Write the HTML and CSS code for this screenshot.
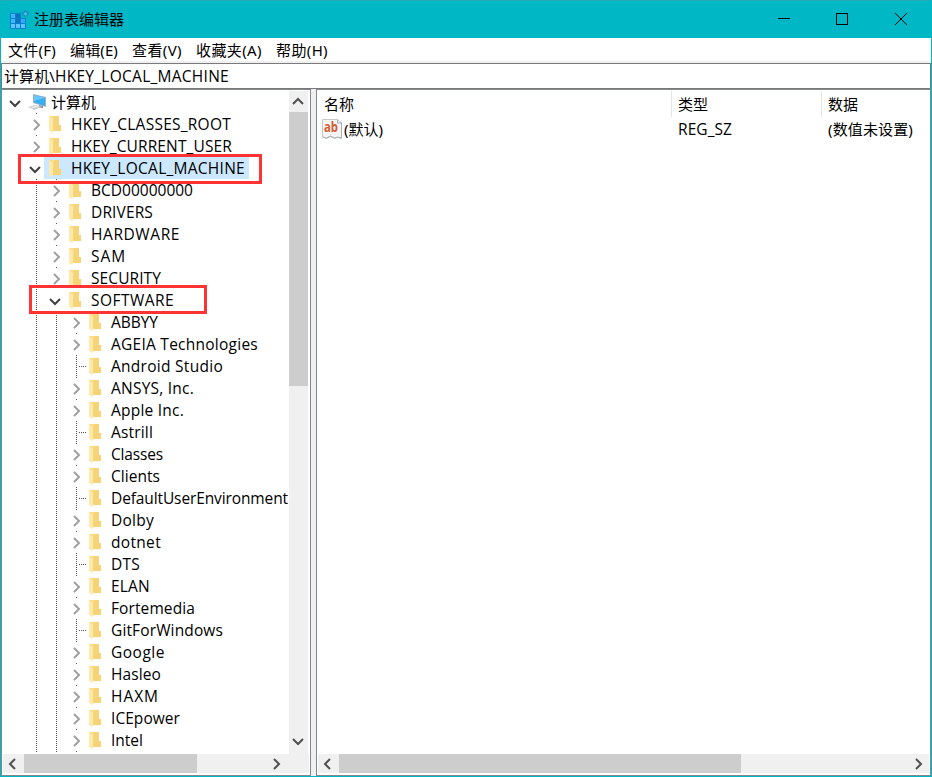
FILE: index.html
```html
<!DOCTYPE html>
<html lang="zh-CN">
<head>
<meta charset="utf-8">
<title>注册表编辑器</title>
<link rel="stylesheet" href="styles.css">
</head>
<body>
<svg class="defs" width="0" height="0" aria-hidden="true">
  <symbol id="folder" viewBox="0 0 13 18"><path d="M0 1h10v9h2v6H3z" fill="#f9dc85"/><path d="M5 1h5v9h2v6H4z" fill="#f5d376"/><path d="M0 1l4 3v13l-1 1-3-2z" fill="#ffe9a9"/></symbol>
  <symbol id="right" viewBox="0 0 8 12"><path d="M1 1l5 5-5 5" fill="none" stroke="currentColor" stroke-width="2"/></symbol>
  <symbol id="down" viewBox="0 0 12 8"><path d="M1 1l5 5 5-5" fill="none" stroke="currentColor" stroke-width="2"/></symbol>
  <symbol id="up" viewBox="0 0 12 8"><path d="M1 7l5-5 5 5" fill="none" stroke="currentColor" stroke-width="2"/></symbol>
  <symbol id="left" viewBox="0 0 8 12"><path d="M7 1L2 6l5 5" fill="none" stroke="currentColor" stroke-width="2"/></symbol>
</svg>
<div class="window">
  <header class="titlebar">
    <svg class="app-icon" width="21" height="20" viewBox="0 0 21 20"><path d="M1 3h16v16H1z" fill="#0a80d0"/><path d="M2 4h4v4H2zM2 9h4v4H2z" fill="#42b4fa"/><path d="M2 14h4v4H2zM7 14h4v4H7zM12 14h4v4h-4z" fill="#5cc5ff"/><path d="M12 9h4v4h-4z" fill="#36a9f3"/><path d="M7 4h4v4H7zM7 9h4v4H7z" fill="#0b72bd"/><path d="M12 0h9v8h-9z" fill="#00b7c5"/><path d="M16.500 0l4 3.500-4 4-4-4z" fill="#168fc0"/><path d="M16.500 2l2 1.700-2 2-2-2z" fill="#48bfdf"/></svg>
    <span class="title" data-w="90">注册表编辑器</span>
    <svg class="controls" width="132" height="14" viewBox="0 0 132 14" fill="none" stroke="#000"><path d="M1 5.500h12M59.500 .5h11v11h-11z" shape-rendering="crispEdges"/><path d="M118 0l12 12M130 0l-12 12"/></svg>
  </header>
  <nav class="menu"><span data-w="48">文件(F)</span><span data-w="48">编辑(E)</span><span data-w="50">查看(V)</span><span data-w="66">收藏夹(A)</span><span data-w="52">帮助(H)</span></nav>
  <div class="address"><span data-w="51">计算机\</span><span class="latin" data-w="174">HKEY_LOCAL_MACHINE</span></div>
  <main class="panes">
    <section class="pane tree-pane">
      <div class="upper">
        <div class="tree" id="tree"></div>
        <div class="vscroll"><svg class="arrow-up" width="12" height="8"><use href="#up"/></svg><div class="vthumb"></div><svg class="arrow-down" width="12" height="8"><use href="#down"/></svg></div>
      </div>
      <div class="hscroll"><svg class="arrow-left" width="8" height="12"><use href="#left"/></svg><div class="hthumb"></div><svg class="arrow-right" width="8" height="12"><use href="#right"/></svg><i class="corner"></i></div>
      <div class="mark mark-machine"></div>
      <div class="mark mark-software"></div>
    </section>
    <section class="pane list-pane">
      <div class="list">
        <div class="columns"><span class="col"><b data-w="30">名称</b></span><span class="col"><b data-w="30">类型</b></span><span class="col"><b data-w="30">数据</b></span></div>
        <div class="columns value"><span class="col"><svg class="ab" width="20" height="20" viewBox="0 0 20 20"><path d="M.5.500h15l4 3v16l-4-1-3 1-4-2-4 2-4-2z" fill="#f5f5f5" stroke="#c3c8cb"/><path d="M15.500 1v3h4v15l-4-1-3 1-4-2-4 2-4-1" fill="none" stroke="#a7adb1"/><text x="2" y="13" textLength="14" lengthAdjust="spacingAndGlyphs">ab</text></svg><b data-w="39">(默认)</b></span><span class="col"><b class="latin" data-w="54">REG_SZ</b></span><span class="col"><b data-w="85">(数值未设置)</b></span></div>
      </div>
      <div class="hscroll"><svg class="arrow-left" width="8" height="12"><use href="#left"/></svg><div class="hthumb wide"></div><svg class="arrow-right" width="8" height="12"><use href="#right"/></svg></div>
    </section>
  </main>
</div>
<script src="script.js"></script>
</body>
</html>
```
FILE: styles.css
```css
* { box-sizing: border-box; }
body { margin: 0; overflow: hidden; font: 15px/22px "Noto Sans", "Noto Sans CJK SC", sans-serif; color: #000; }
.defs { position: absolute; }
svg { display: block; flex: none; }
b { font-weight: 400; }
span, b { white-space: nowrap; }
.latin { font-family: "Open Sans", "Noto Sans", sans-serif; font-size: 15.5px; }
.window { width: 932px; height: 777px; border: solid #00b7c3; border-width: 0 1px 1px; background: #f0f0f0; display: flex; flex-direction: column; }
.titlebar { height: 38px; flex: none; background: #00b7c5; border-top: 1px solid #24abb5; display: flex; align-items: center; padding: 0 22px 0 8px; }
.title { margin: 0 0 2px 4px; }
.controls { margin-left: auto; }
.menu { height: 23px; flex: none; background: #fff; display: flex; gap: 14px; padding: 1px 0 0 7px; }
.address { height: 26px; flex: none; margin-top: 2px; background: #fff; border: 1px solid #7a7a7a; padding: 1px 3px 1px 2px; display: flex; align-items: baseline; }
.panes { flex: 1; display: flex; gap: 5px; min-height: 0; }
.pane { border: 1px solid #828790; background: #fff; padding: 1px; display: flex; flex-direction: column; position: relative; }
.tree-pane { width: 310px; }
.list-pane { flex: 1; }
.upper { height: 663px; display: flex; }
.tree { width: 286px; overflow: hidden; }
.row { height: 22px; display: flex; align-items: center; }
.row.tail { height: 1px; overflow: hidden; align-items: flex-start; }
.guide { width: 20px; height: 22px; flex: none; display: flex; position: relative; color: #a0a0a0; }
.guide.line::before { content: ""; width: 1px; height: 22px; flex: none; margin-left: 13px; background: repeating-linear-gradient(#555 0 1px, transparent 1px 2px); }
.guide.branch::after { content: ""; width: 8px; height: 1px; flex: none; margin-left: 1px; align-self: center; background: repeating-linear-gradient(90deg, transparent 0 1px, #555 1px 2px); }
.guide.closed::before { background: linear-gradient(#555 0 1px, transparent 1px); }
.guide.root::before, .guide.open::before { display: none; }
.chevron { position: absolute; left: 10px; top: 6px; }
.open .chevron { left: 6px; top: 9px; color: #404040; }
.item { display: flex; align-items: center; height: 22px; padding: 0 4px 0 5px; margin-left: 1px; }
.item .name { margin: 0 0 1px 9px; }
.folder { margin: 0 0 1px; }
.item.computer { padding-left: 4px; }
.item.computer .name { margin: 0 0 0 3px; }
.item.selected { background: #cce8ff; }
.vscroll { width: 19px; background: #f0f0f0; display: flex; flex-direction: column; align-items: center; color: #505050; }
.arrow-up { margin: 6px 1px 7px 0; }
.vthumb { width: 19px; height: 274px; background: #cdcdcd; }
.arrow-down { margin: auto 1px 8px 0; }
.hscroll { height: 19px; flex: none; background: #f0f0f0; display: flex; align-items: center; color: #505050; }
.arrow-left { margin: 0 8px 0 5px; }
.hthumb { width: 173px; height: 19px; background: #cdcdcd; }
.hthumb.wide { width: 402px; }
.arrow-right { margin-left: auto; margin-right: 6px; }
.corner { width: 22px; }
.mark { position: absolute; border: 3px solid #ff3333; }
.mark-machine { left: 16px; top: 64px; width: 244px; height: 30px; }
.mark-software { left: 27px; top: 195px; width: 178px; height: 29px; }
.list { height: 663px; }
.columns { display: grid; grid-template-columns: 354px 150px 1fr; height: 26px; }
.columns.value { height: 24px; }
.col { display: flex; align-items: center; padding-left: 6px; border-right: 1px solid #e5e5e5; }
.col:last-child { border: 0; }
.value .col { border-color: transparent; }
.value .col:first-child { padding-left: 4px; gap: 2px; }
.ab text { font: bold 14px "Open Sans", sans-serif; fill: #d45b32; }
```
FILE: script.js
```js
const rows = [
  [0, "计算机", "open", 45], [1, "HKEY_CLASSES_ROOT", "closed", 160],
  [1, "HKEY_CURRENT_USER", "closed", 161], [1, "HKEY_LOCAL_MACHINE", "open", 174],
  [2, "BCD00000000", "closed", 102], [2, "DRIVERS", "closed", 62],
  [2, "HARDWARE", "closed", 89], [2, "SAM", "closed", 35],
  [2, "SECURITY", "closed", 70], [2, "SOFTWARE", "open", 83],
  [3, "ABBYY", "closed", 47], [3, "AGEIA Technologies", "closed", 147],
  [3, "Android Studio", "branch", 112], [3, "ANSYS, Inc.", "closed", 83],
  [3, "Apple Inc.", "closed", 73], [3, "Astrill", "branch", 42],
  [3, "Classes", "closed", 52], [3, "Clients", "closed", 49],
  [3, "DefaultUserEnvironment", "branch", 177], [3, "Dolby", "closed", 43],
  [3, "dotnet", "closed", 50], [3, "DTS", "branch", 29],
  [3, "ELAN", "closed", 39], [3, "Fortemedia", "closed", 84],
  [3, "GitForWindows", "branch", 112], [3, "Google", "closed", 54],
  [3, "Hasleo", "closed", 50], [3, "HAXM", "closed", 48],
  [3, "ICEpower", "closed", 69], [3, "Intel", "closed", 32]
];
const computer = '<svg width="20" height="18" viewBox="0 0 20 18"><path d="M5 1l13 3v10L5 10z" fill="#9fb1bf"/><path d="M6 2l11 3v8L6 9z" fill="#35adf4"/><path d="M6 2l11 3-11 3z" fill="#67c6fa"/><path d="M11 12l4 1v2h-4z" fill="#81919c"/><path d="M0 14l7-2 7 2-8 3z" fill="#c9ced1"/><path d="M2 14l6-1 3 1-6 1z" fill="#eceeef"/></svg>';
const folder = '<svg class="folder" width="13" height="18"><use href="#folder"/></svg>';
const tail = '<div class="row tail"><i class="guide"></i><i class="guide line"></i><i class="guide line"></i><i class="guide line"></i></div>';
document.getElementById("tree").innerHTML = rows.map(([level, name, state, width]) => {
  let guides = "";
  for (let i = 1; i < level; i++) guides += '<i class="guide line"></i>';
  const chevron = state === "open"
    ? '<svg class="chevron" width="12" height="8"><use href="#down"/></svg>'
    : state === "closed" ? '<svg class="chevron" width="8" height="12"><use href="#right"/></svg>' : "";
  const indent = level ? '<i class="guide"></i>' : "";
  return `<div class="row">${indent}${guides}<i class="guide line ${state} ${level ? "" : "root"}">${chevron}</i><div class="item ${level ? "" : "computer"} ${name === "HKEY_LOCAL_MACHINE" ? "selected" : ""}">${level ? folder : computer}<span class="name ${level ? "latin" : ""}" data-w="${width}">${name}</span></div></div>`;
}).join("") + tail;
for (const el of document.querySelectorAll("[data-w]")) {
  const natural = el.getBoundingClientRect().width;
  el.style.letterSpacing = (Number(el.dataset.w) - natural) / el.textContent.length + "px";
}
```
